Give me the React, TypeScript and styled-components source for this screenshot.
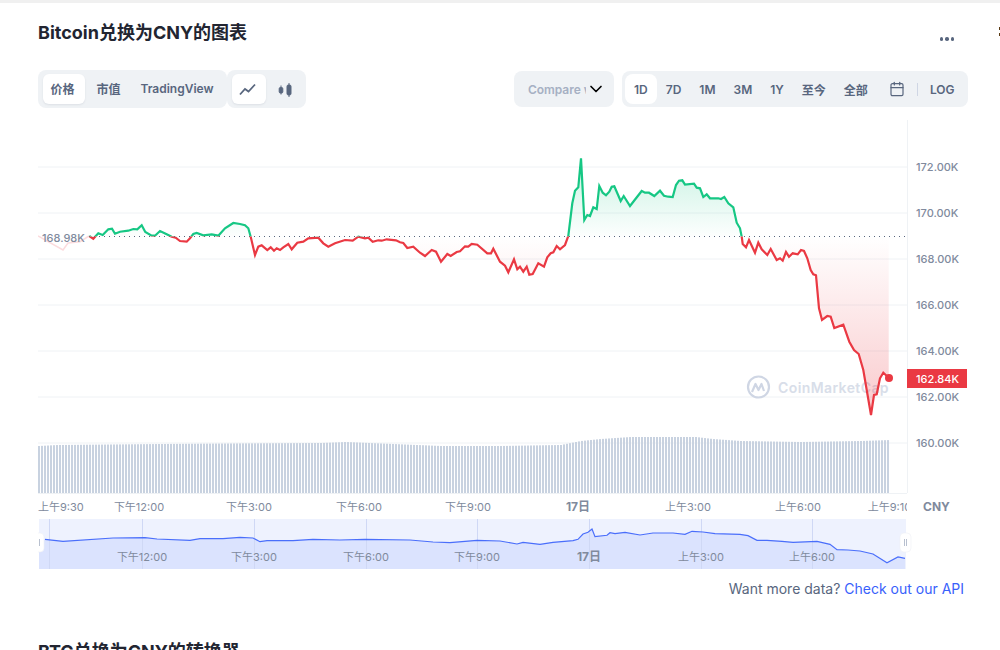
import React from 'react';
import styled, { createGlobalStyle } from 'styled-components';
import { Calendar, ChevronDown } from 'lucide-react';

const FONT = `Inter, "Noto Sans CJK SC", sans-serif`;
const BASELINE = 236.5;

const PRICE: number[][] = [
  [89.3,236],[93.3,238.7],[98.3,233.3],[102.7,235],[108.3,229.3],[112,228.7],[115,233.7],[120,231.7],[128.3,230.7],[133.3,229],
  [137.3,229.3],[141.7,225.3],[145.3,232],[151.7,235.7],[155,235.7],[160,231],[166.7,234.3],[171.7,236.7],[175.7,237.7],[180,241],
  [186.7,241.7],[190,238.3],[193.3,234],[196.7,233],[203.3,235.3],[211.7,234.3],[218.3,235.7],[225,228.3],[233.3,223],[240,224],
  [245,225.3],[248.3,228.3],[250.7,236.7],[255,255],[258.3,246.7],[261.7,245.3],[267.3,250],[270.7,247.3],[274,250.7],[276.7,248.3],
  [280,250],[283.3,247.3],[288.3,244],[291.7,249.3],[297.3,242.7],[303.3,241.7],[308.3,238.3],[318.3,237.7],[323.3,243.3],[328.3,246.7],
  [335,243.3],[345,240],[352.7,240.7],[358.3,236.7],[365,238.3],[368.3,237.7],[372.7,241.7],[378.3,240.3],[381.7,240.7],[386.7,239.3],
  [396,240.3],[400,242.3],[403.3,243],[407.3,248],[413.3,246.7],[420,252.7],[425,256],[431.7,250],[436,251.7],[441,261.7],
  [447.3,254],[450.7,256],[456.7,252],[460,251.3],[465,246.3],[468.3,246.7],[471.7,244],[477.3,244.7],[487.3,253.3],[491,253.3],
  [493.3,248.7],[500,261.7],[505,265.7],[508.3,272.3],[514,259.3],[517.3,269.3],[520,266.7],[523.3,271.7],[526.7,266.7],[529.3,274.7],
  [532.7,274],[538.3,263.3],[544,266.7],[547.3,257.3],[550.7,253.3],[553.3,252.3],[556.7,246],[560,249.3],[565,245],[568.3,236],
  [572.3,203.3],[575,190.7],[578.3,187.3],[581,158.3],[584.3,220],[587.3,215],[590,216],[593.3,207.3],[596.7,209],[599.3,186],
  [602.7,192.7],[606,195.3],[609.3,191.7],[611.7,186.7],[614.3,186.3],[620.7,201],[623.7,196],[630,206],[641.7,191],[645,192.7],
  [649,192.7],[654.3,196],[660,190.7],[664,195.7],[668.3,196.7],[672.7,197],[676,185],[679,180.7],[682.3,180.3],[685,184.7],
  [694,183.7],[696.7,187.7],[700,188.3],[703.3,197],[706.7,194.3],[710,198.3],[718.3,198.3],[721,199],[724.3,197],[728.3,203.3],
  [733.3,207.3],[736.7,222.7],[740,228.3],[741.7,236.7],[742.7,244],[746,247.3],[749,240],[755,252.7],[758.3,242.7],[761.7,249.3],
  [767.3,255],[770.7,249],[776.7,260],[780,258.3],[782.7,260.7],[786,252],[789,256.7],[792.7,253.3],[797.7,254.3],[801,250],
  [804,251],[807.3,258.3],[810.7,270],[813.3,274.3],[816,275.3],[819,308.3],[822,320],[827.3,316],[830.7,316.7],[834.3,328],
  [843.3,324.7],[849.3,341.7],[854,350],[858.7,354],[863.3,370],[871,415],[874,395],[876.7,394.3],[880,378.3],[883.3,372.7],[888.7,377.7],
];

const MINI: number[][] = [
  [45,539.3],[63,541.3],[113,538],[145,537.7],[157,539],[190,540.3],[200,538.7],[223,538.7],[240,537.3],[253,538],[260,541.7],
  [267,540.7],[293,540.7],[313,539.3],[340,540],[365,539.3],[410,540],[433,542],[450,542.7],[477,540.3],[500,541],[517,544],
  [523,542.3],[540,544.3],[553,542.3],[573,540.7],[578,539.3],[583,534],[588,532.3],[592,529],[595,536.7],[607,535.3],[610,532.7],
  [615,533.7],[625,532.3],[640,535],[653,533],[673,533],[685,534.3],[692,531.3],[703,532],[715,533.7],[740,534.3],[748,535.7],
  [757,540.3],[767,540.3],[782,541.3],[793,542.3],[817,541.3],[830,544.3],[837,549.7],[848,550],[860,551],[873,554],[887,562.7],
  [898,557],[905,558.3],
];

const VOLUME_TOPS: number[][] = [
  [38,446],[57,445],[160,444],[240,443.4],[320,443],[345,442],[440,446],[500,446],[560,445],[580,441],[600,439],[630,437],[695,437],
  [712,439],[740,441],[800,442],[860,441],[890,440],
];

const GRID = [
  { y: 167, label: '172.00K' },
  { y: 213, label: '170.00K' },
  { y: 259, label: '168.00K' },
  { y: 305, label: '166.00K' },
  { y: 351, label: '164.00K' },
  { y: 397, label: '162.00K' },
  { y: 443, label: '160.00K' },
];

const X_LABELS = [
  { x: 139, label: '下午12:00' },
  { x: 249, label: '下午3:00' },
  { x: 359, label: '下午6:00' },
  { x: 468, label: '下午9:00' },
  { x: 578, label: '17日', bold: true },
  { x: 688, label: '上午3:00' },
  { x: 798, label: '上午6:00' },
  { x: 889.5, label: '上午9:10' },
];

const MINI_LABELS = [
  { x: 142, label: '下午12:00' },
  { x: 254, label: '下午3:00' },
  { x: 366, label: '下午6:00' },
  { x: 477, label: '下午9:00' },
  { x: 589, label: '17日', bold: true },
  { x: 701, label: '上午3:00' },
  { x: 812, label: '上午6:00' },
];

const RANGES = ['1D', '7D', '1M', '3M', '1Y', '至今', '全部'];

const toPoints = (list: number[][]) => list.map(p => p.join(',')).join(' ');

function volumeTop(x: number): number {
  for (let i = 1; i < VOLUME_TOPS.length; i++) {
    const [x0, y0] = VOLUME_TOPS[i - 1];
    const [x1, y1] = VOLUME_TOPS[i];
    if (x <= x1) return y0 + ((y1 - y0) * (x - x0)) / (x1 - x0);
  }
  return 440;
}

const BARS = Array.from({ length: 284 }, (_, i) => 38 + i * 3);

const GlobalStyle = createGlobalStyle`
  html, body {
    margin: 0;
    background: #fff;
  }
`;

const Page = styled.div`
  width: 1000px;
  height: 650px;
  overflow: hidden;
  display: flex;
  border-top: 3px solid #f0f0f0;
  box-sizing: border-box;
  font-family: ${FONT};
  color: #222531;
`;

const Main = styled.main`
  flex: 0 0 998px;
  padding: 0 31px 0 38px;
  box-sizing: border-box;
`;

const SideMark = styled.div`
  flex: 0 0 2px;
  height: 3px;
  margin-top: 24px;
  background: #5a3a12;
  box-shadow: 0 6px 0 #5a3a12;
`;

const Header = styled.div`
  display: flex;
  justify-content: space-between;
  align-items: flex-start;
  height: 67px;
  padding-top: 18px;
  box-sizing: border-box;
`;

const Title = styled.h2`
  margin: 0;
  font-size: 18px;
  line-height: 24px;
  font-weight: 700;
`;

const MoreDots = styled.div`
  display: flex;
  gap: 2px;
  margin: 16px 14px 0 0;
`;

const Dot = styled.span`
  width: 3.5px;
  height: 3.5px;
  border-radius: 50%;
  background: #58667e;
`;

const Toolbar = styled.div`
  display: flex;
  justify-content: space-between;
  align-items: center;
  height: 38px;
`;

const ToolGroup = styled.div`
  display: flex;
  align-items: center;
`;

const Segment = styled.div<{ $endPad?: number }>`
  display: flex;
  align-items: center;
  height: 38px;
  padding: 0 ${({ $endPad }) => $endPad ?? 5}px 0 5px;
  background: #eff2f5;
  border-radius: 8px;
`;

const TabButton = styled.button<{ $active?: boolean; $width: number }>`
  width: ${({ $width }) => $width}px;
  height: 30px;
  border: 0;
  padding: 0 ${({ $active }) => ($active ? 3 : 0)}px 2px 0;
  border-radius: 6px;
  font: 600 12px ${FONT};
  color: #58667e;
  background: ${({ $active }) => ($active ? '#fff' : 'transparent')};
  box-shadow: ${({ $active }) => ($active ? '0 1px 2px rgba(88,102,126,0.12)' : 'none')};
  display: flex;
  align-items: center;
  justify-content: center;
`;

const RightGroup = styled.div`
  display: flex;
  align-items: center;
  gap: 8px;
`;

const CompareBox = styled.div`
  width: 100px;
  height: 36px;
  box-sizing: border-box;
  padding: 0 8px 0 14px;
  background: #eff2f5;
  border-radius: 8px;
  display: flex;
  align-items: center;
  justify-content: space-between;
`;

const CompareText = styled.span`
  width: 58px;
  overflow: hidden;
  white-space: nowrap;
  font-size: 12px;
  font-weight: 600;
  letter-spacing: -0.05px;
  color: #a6b0c3;
`;

const RangeBar = styled.div`
  width: 346px;
  height: 36px;
  box-sizing: border-box;
  padding: 0 11px 0 3px;
  background: #eff2f5;
  border-radius: 8px;
  display: flex;
  align-items: center;
`;

const RangeButton = styled.button<{ $active?: boolean }>`
  height: 30px;
  border: 0;
  padding: 0 9px;
  border-radius: 8px;
  font: 600 12px ${FONT};
  color: #58667e;
  background: ${({ $active }) => ($active ? '#fff' : 'transparent')};
`;

const CalendarSlot = styled.span`
  display: flex;
  color: #58667e;
  margin-left: 12px;
`;

const RangeDivider = styled.span`
  width: 1px;
  height: 13px;
  margin: 0 12px;
  background: #cfd6e4;
`;

const LogLabel = styled.span`
  font-size: 12px;
  font-weight: 600;
  color: #58667e;
`;

const ChartFrame = styled.svg`
  display: block;
  width: 930px;
  height: 450px;
  margin-top: 12px;
  font-family: ${FONT};
`;

const AxisText = styled.text<{ $bold?: boolean }>`
  font-size: ${({ $bold }) => ($bold ? 12 : 11)}px;
  font-weight: ${({ $bold }) => ($bold ? 700 : 400)};
  fill: #808a9d;
`;

const PriceText = styled.text`
  font-size: 11px;
  font-weight: 500;
  fill: #808a9d;
`;

const BadgeText = styled.text`
  font-size: 11px;
  font-weight: 500;
  fill: #fff;
`;

const Watermark = styled.text`
  font-size: 14px;
  font-weight: 600;
  letter-spacing: 0.4px;
  fill: #cfd6e4;
  opacity: 0.8;
`;

const ApiNote = styled.p`
  margin: 10px 4px 0 0;
  text-align: right;
  font-size: 14px;
  line-height: 18px;
  color: #58667e;
`;

const ApiLink = styled.a`
  color: #3861fb;
  text-decoration: none;
`;

const ConverterTitle = styled(Title)`
  margin-top: 42px;
`;

const LineIcon = () => (
  <svg width="18" height="16" viewBox="0 -2 18 16" fill="none" stroke="#58667e" strokeWidth="1.8">
    <path d="M1 12.5 L6 7 L9.5 9.5 L16 2.5" />
  </svg>
);

const CandleIcon = () => (
  <svg width="14" height="18" viewBox="0 -3 14 18" fill="#58667e" stroke="#58667e" strokeWidth="1">
    <path d="M3 3.5 V12.5" fill="none" />
    <rect x="1.2" y="5.5" width="3.6" height="5.5" rx="1.2" />
    <path d="M11 1 V15" fill="none" />
    <rect x="9" y="3" width="4" height="10" rx="1.4" />
  </svg>
);

const Handle = ({ x }: { x: number }) => (
  <g>
    <rect x={x} y={533} width={11} height={19} rx={4} fill="#fff" stroke="#eef0f5" strokeWidth={0.6} />
    <path d={`M${x + 4.5} 539 V546 M${x + 6.5} 539 V546`} stroke="#a6b0c3" strokeWidth={0.8} />
  </g>
);

const PriceChart = () => (
  <ChartFrame viewBox="38 120 930 450">
    <defs>
      <clipPath id="above"><rect x="38" y="120" width="870" height={BASELINE - 120} /></clipPath>
      <clipPath id="below"><rect x="38" y={BASELINE} width="870" height="260" /></clipPath>
      <clipPath id="xAxis"><rect x="38" y="498" width="869" height="20" /></clipPath>
      <clipPath id="miniArea"><rect x="39" y="519" width="867" height="50" /></clipPath>
      <linearGradient id="greenFill" gradientUnits="userSpaceOnUse" x1="0" y1="158" x2="0" y2={BASELINE}>
        <stop offset="0" stopColor="#16c784" stopOpacity="0.24" />
        <stop offset="1" stopColor="#16c784" stopOpacity="0.01" />
      </linearGradient>
      <linearGradient id="redFill" gradientUnits="userSpaceOnUse" x1="0" y1={BASELINE} x2="0" y2="415">
        <stop offset="0" stopColor="#ea3943" stopOpacity="0" />
        <stop offset="1" stopColor="#ea3943" stopOpacity="0.27" />
      </linearGradient>
    </defs>

    {GRID.map(g => (
      <line key={g.y} x1="38" x2="907" y1={g.y} y2={g.y} stroke="#eff2f5" />
    ))}
    <line x1="907.5" x2="907.5" y1="120" y2="493" stroke="#eff2f5" />
    <line x1="38" x2="907" y1="493.5" y2="493.5" stroke="#eff2f5" />

    {BARS.map(x => (
      <rect key={x} x={x} y={volumeTop(x)} width="2" height={493 - volumeTop(x)} fill="#c8d2e0" />
    ))}

    <g fill="none" stroke="#cfd6e4" strokeWidth="2.2">
      <circle cx="758.5" cy="387" r="10.5" />
      <path d="M752 392 L755.5 384 L758.5 390 L761.5 384 L764 391" strokeLinejoin="round" />
    </g>
    <Watermark x="778" y="393">CoinMarketCap</Watermark>

    <polygon
      points={`${toPoints(PRICE)} 888.7,${BASELINE} 89.3,${BASELINE}`}
      fill="url(#greenFill)"
      clipPath="url(#above)"
    />
    <polygon
      points={`${toPoints(PRICE)} 888.7,${BASELINE} 89.3,${BASELINE}`}
      fill="url(#redFill)"
      clipPath="url(#below)"
    />
    <line x1="89" x2="907" y1={BASELINE} y2={BASELINE} stroke="#58667e" strokeDasharray="1 4" />
    <polyline
      points="38,236 63,250 68,243 80,241.7 89,236"
      fill="none"
      stroke="#ea3943"
      strokeOpacity="0.18"
      strokeWidth="1.5"
    />
    <polyline points={toPoints(PRICE)} fill="none" stroke="#16c784" strokeWidth="2.2" clipPath="url(#above)" />
    <polyline points={toPoints(PRICE)} fill="none" stroke="#ea3943" strokeWidth="2.2" clipPath="url(#below)" />
    <circle cx="889" cy="378" r="4" fill="#ea3943" />
    <PriceText x="42" y="242">168.98K</PriceText>

    {GRID.map(g => (
      <PriceText key={g.label} x="916" y={g.y + 4}>{g.label}</PriceText>
    ))}
    <rect x="907" y="369" width="60" height="19" fill="#ea3943" />
    <BadgeText x="916" y="382.5">162.84K</BadgeText>

    <g clipPath="url(#xAxis)">
      <AxisText x="38" y="511">上午9:30</AxisText>
      {X_LABELS.map(l => (
        <AxisText key={l.x} x={l.x} y="511" textAnchor="middle" $bold={l.bold}>{l.label}</AxisText>
      ))}
    </g>
    <AxisText x="923" y="511" $bold>CNY</AxisText>

    <rect x="39" y="519" width="867" height="50" fill="#eef2fe" />
    <polygon points={`${toPoints(MINI)} 905,569 45,569`} fill="#dbe3fe" />
    <rect x="39" y="539" width="6" height="30" fill="#dbe3fe" />
    {[49, ...MINI_LABELS.map(l => l.x)].map(x => (
      <line key={x} x1={x + 0.5} x2={x + 0.5} y1="519" y2="569" stroke="#cfd8f5" />
    ))}
    <polyline points={toPoints(MINI)} fill="none" stroke="#3861fb" strokeOpacity="0.9" strokeWidth="1.2" clipPath="url(#miniArea)" />
    {MINI_LABELS.map(l => (
      <AxisText key={l.x} x={l.x} y="561" textAnchor="middle" $bold={l.bold}>{l.label}</AxisText>
    ))}
    <Handle x={33} />
    <Handle x={900} />
  </ChartFrame>
);

export default function App() {
  return (
    <>
      <GlobalStyle />
      <Page>
        <Main>
          <Header>
            <Title>Bitcoin兑换为CNY的图表</Title>
            <MoreDots>
              <Dot />
              <Dot />
              <Dot />
            </MoreDots>
          </Header>
          <Toolbar>
            <ToolGroup>
              <Segment>
                <TabButton $active $width={42}>价格</TabButton>
                <TabButton $width={47}>市值</TabButton>
                <TabButton $width={90}>TradingView</TabButton>
              </Segment>
              <Segment $endPad={3}>
                <TabButton $active $width={34}><LineIcon /></TabButton>
                <TabButton $width={37}><CandleIcon /></TabButton>
              </Segment>
            </ToolGroup>
            <RightGroup>
              <CompareBox>
                <CompareText>Compare with</CompareText>
                <ChevronDown size={20} strokeWidth={2} color="#000" />
              </CompareBox>
              <RangeBar>
                {RANGES.map(r => (
                  <RangeButton key={r} $active={r === '1D'}>{r}</RangeButton>
                ))}
                <CalendarSlot><Calendar size={16} strokeWidth={1.8} /></CalendarSlot>
                <RangeDivider />
                <LogLabel>LOG</LogLabel>
              </RangeBar>
            </RightGroup>
          </Toolbar>
          <PriceChart />
          <ApiNote>
            Want more data? <ApiLink href="#">Check out our API</ApiLink>
          </ApiNote>
          <ConverterTitle>BTC兑换为CNY的转换器</ConverterTitle>
        </Main>
        <SideMark />
      </Page>
    </>
  );
}
